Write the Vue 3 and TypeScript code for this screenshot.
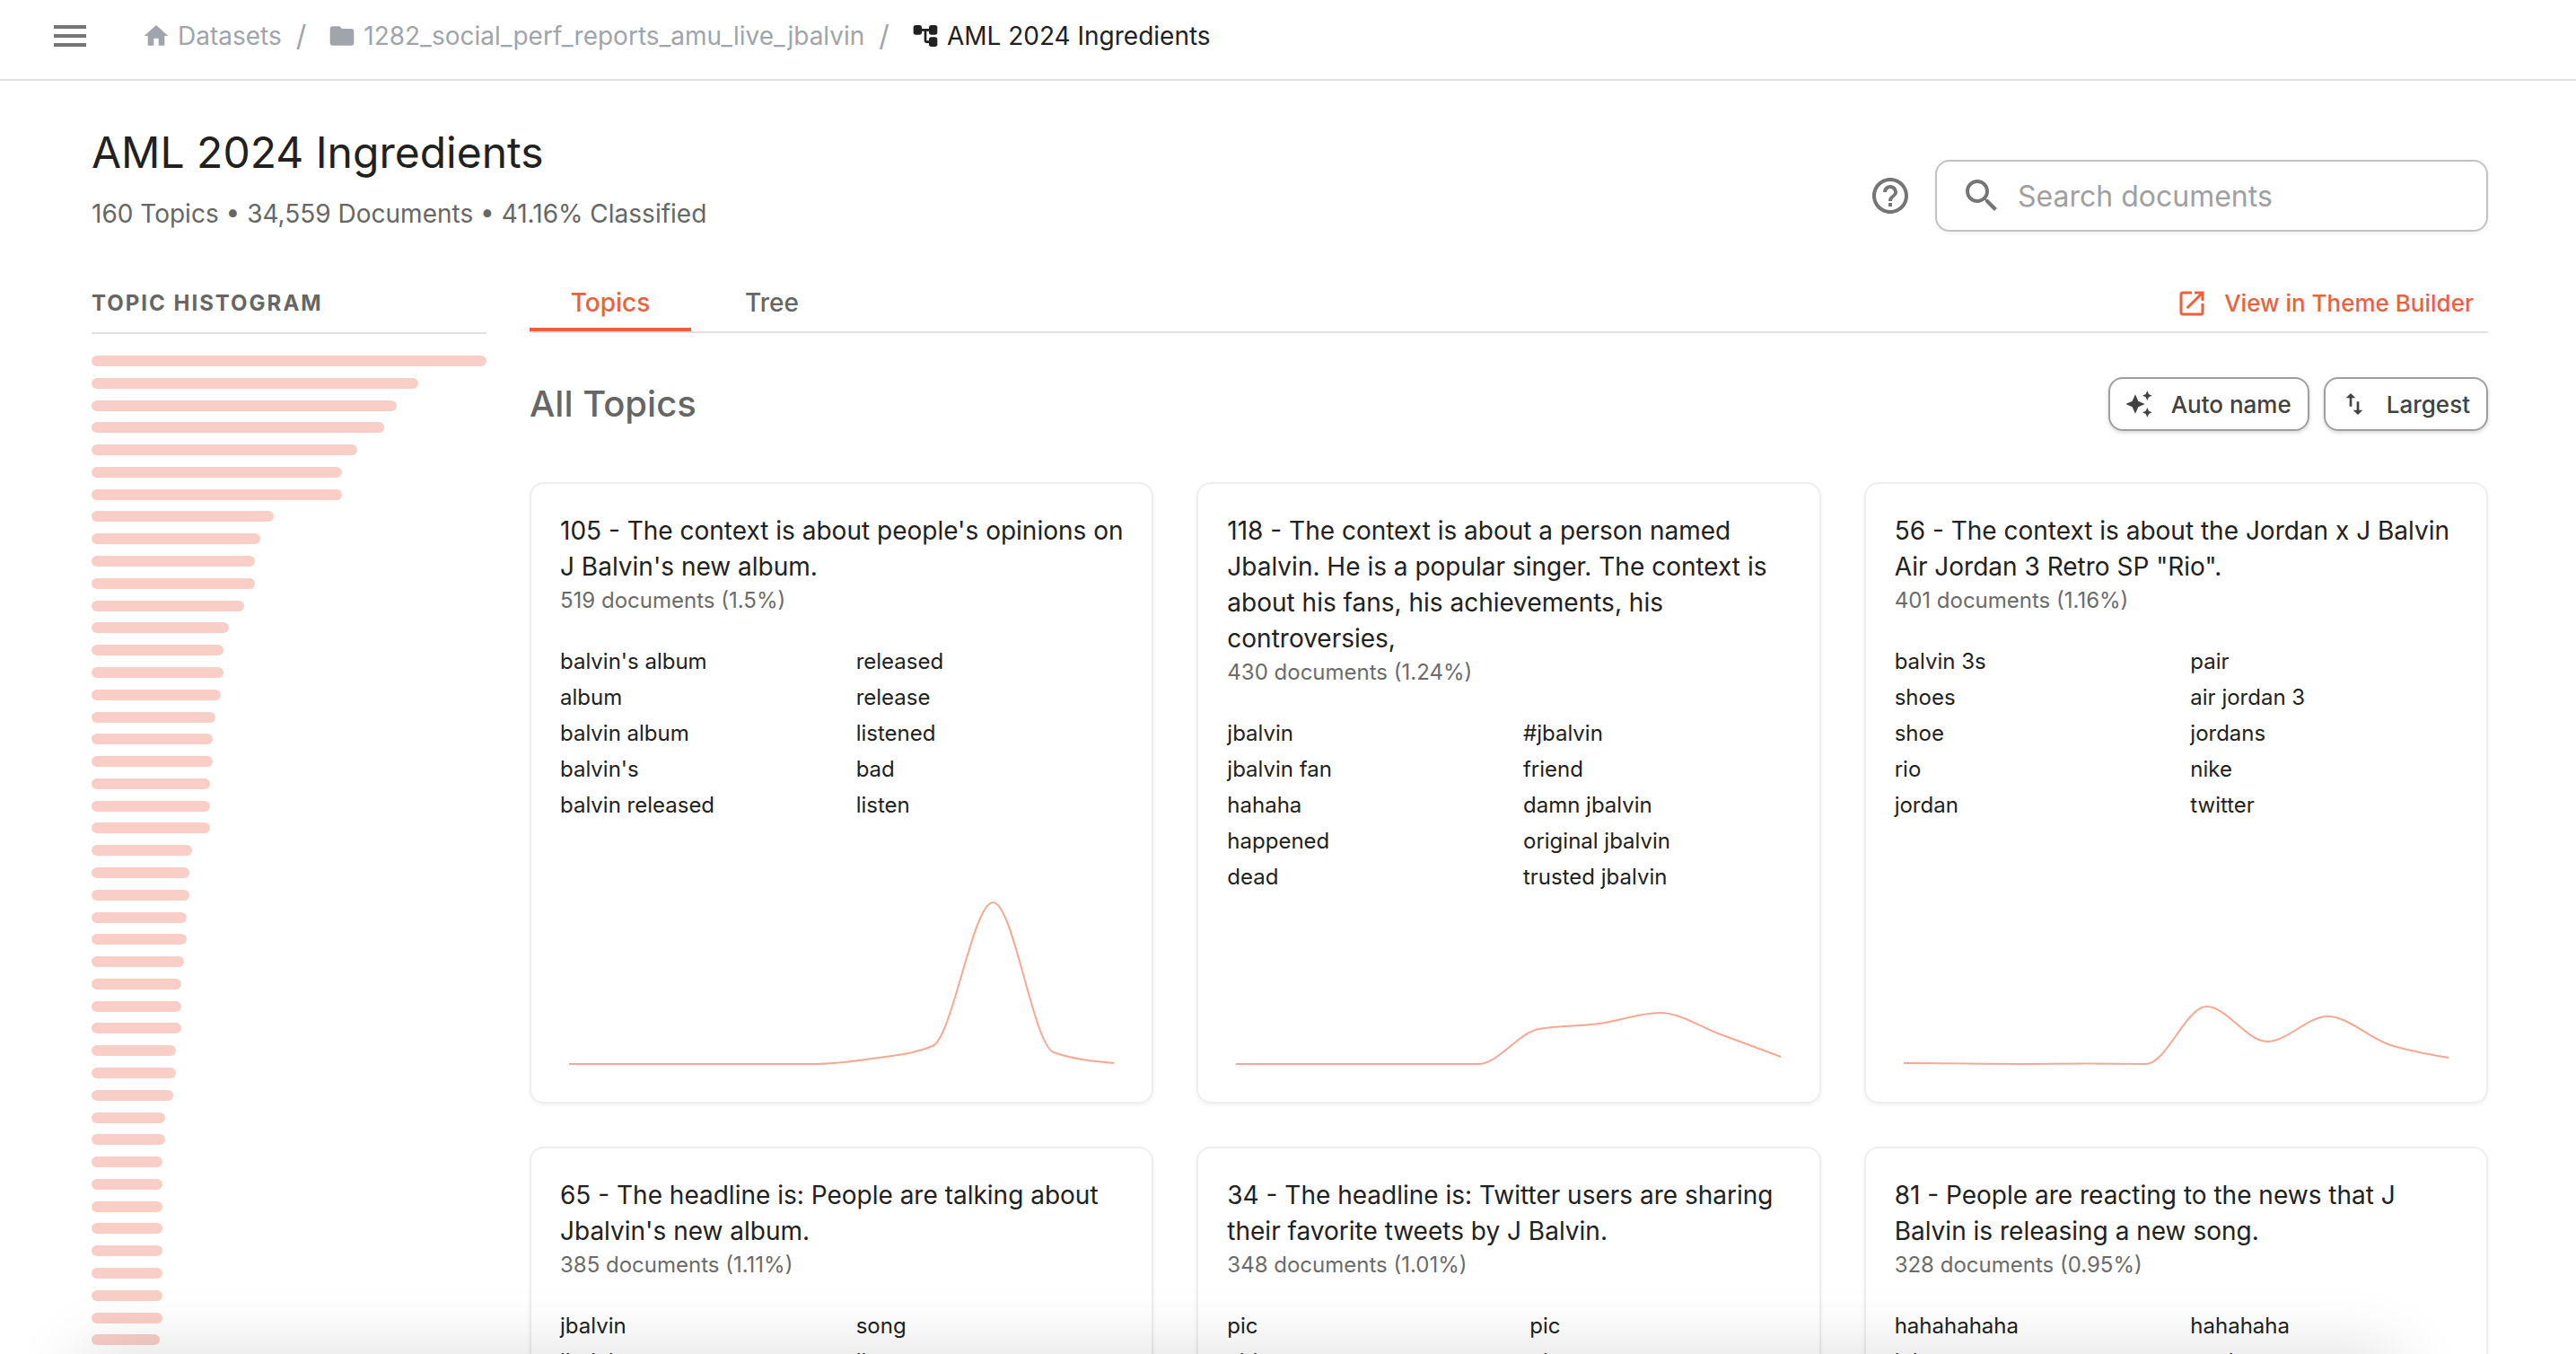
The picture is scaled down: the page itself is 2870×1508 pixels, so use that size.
<script setup lang="ts">
interface Topic {
  title: string
  meta: string
  keywords: [string, string][]
  trend: number[]
  wideLead?: boolean
}

const documentCounts: number[] = [
  519, 429, 401, 385, 349, 329, 329, 239, 222, 215, 215, 201, 180, 173, 173,
  170, 163, 159, 159, 156, 156, 156, 132, 129, 129, 125, 125, 122, 118, 118,
  118, 111, 111, 107, 97, 97, 93, 93, 93, 93, 93, 93, 93, 93, 90,
]
const largest = Math.max(...documentCounts)

const topics: Topic[] = [
  {
    title: "105 - The context is about people's opinions on J Balvin's new album.",
    meta: '519 documents (1.5%)',
    keywords: [
      ["balvin's album", 'released'],
      ['album', 'release'],
      ['balvin album', 'listened'],
      ["balvin's", 'bad'],
      ['balvin released', 'listen'],
    ],
    trend: [0, 0, 0, 0, 0, 6, 20, 180, 13, 1],
  },
  {
    title:
      '118 - The context is about a person named Jbalvin. He is a popular singer. The context is about his fans, his achievements, his controversies,',
    meta: '430 documents (1.24%)',
    keywords: [
      ['jbalvin', '#jbalvin'],
      ['jbalvin fan', 'friend'],
      ['hahaha', 'damn jbalvin'],
      ['happened', 'original jbalvin'],
      ['dead', 'trusted jbalvin'],
    ],
    trend: [0, 0, 0, 0, 0, 39, 45, 57, 33, 8],
  },
  {
    title: '56 - The context is about the Jordan x J Balvin Air Jordan 3 Retro SP "Rio".',
    meta: '401 documents (1.16%)',
    keywords: [
      ['balvin 3s', 'pair'],
      ['shoes', 'air jordan 3'],
      ['shoe', 'jordans'],
      ['rio', 'nike'],
      ['jordan', 'twitter'],
    ],
    trend: [1, 0.5, 0, 0.5, 0, 64, 25, 53, 22, 7],
  },
  {
    title: "65 - The headline is: People are talking about Jbalvin's new album.",
    meta: '385 documents (1.11%)',
    keywords: [
      ['jbalvin', 'song'],
      ['jbalvin', 'listen'],
    ],
    trend: [],
  },
  {
    title: '34 - The headline is: Twitter users are sharing their favorite tweets by J Balvin.',
    meta: '348 documents (1.01%)',
    keywords: [
      ['pic', 'pic'],
      ['vid', 'pic'],
    ],
    trend: [],
    wideLead: true,
  },
  {
    title: '81 - People are reacting to the news that J Balvin is releasing a new song.',
    meta: '328 documents (0.95%)',
    keywords: [
      ['hahahahaha', 'hahahaha'],
      ['lol', 'cool'],
    ],
    trend: [],
  },
]

const CHART = { width: 628, height: 198, inset: 10 }

/* Monotone cubic interpolation through evenly spaced samples. */
function trendPath(values: number[]): string {
  const n = values.length
  if (n < 2) return ''
  const step = (CHART.width - CHART.inset * 2) / (n - 1)
  const pts = values.map((v, i) => ({
    x: CHART.inset + i * step,
    y: CHART.height - CHART.inset - v,
  }))
  const slopes = pts.slice(1).map((p, i) => (p.y - pts[i].y) / step)
  const tangents = pts.map((_, i) => {
    if (i === 0 || i === n - 1) return 0
    const a = slopes[i - 1]
    const b = slopes[i]
    if (a * b <= 0) return 0
    return Math.sign(a) * Math.min(Math.abs(a), Math.abs(b), Math.abs(a + b) / 4) * 2
  })
  tangents[0] = (3 * slopes[0] - tangents[1]) / 2
  tangents[n - 1] = (3 * slopes[n - 2] - tangents[n - 2]) / 2
  let d = `M${pts[0].x} ${pts[0].y}`
  for (let i = 1; i < n; i++) {
    const p = pts[i - 1]
    const q = pts[i]
    const third = step / 3
    d += `C${p.x + third} ${p.y + tangents[i - 1] * third} ${q.x - third} ${q.y - tangents[i] * third} ${q.x} ${q.y}`
  }
  return d
}
</script>

<template>
  <div class="page">
    <header class="topbar">
      <button class="icon-button" type="button" aria-label="Open menu">
        <svg class="icon-l" viewBox="0 0 24 24"><path d="M3 18h18v-2H3v2zm0-5h18v-2H3v2zm0-7v2h18V6H3z" /></svg>
      </button>
      <nav class="crumbs" aria-label="Breadcrumb">
        <a class="crumb" href="#datasets">
          <svg class="icon-s" viewBox="0 0 24 24"><path d="M10 20v-6h4v6h5v-8h3L12 3 2 12h3v8z" /></svg>
          Datasets
        </a>
        <span class="slash">/</span>
        <a class="crumb" href="#folder">
          <svg class="icon-s" viewBox="0 0 24 24"><path d="M10 4H4c-1.100 0-1.990.9-1.990 2L2 18c0 1.100.9 2 2 2h16c1.100 0 2-.9 2-2V8c0-1.100-.9-2-2-2h-8l-2-2z" /></svg>
          1282_social_perf_reports_amu_live_jbalvin
        </a>
        <span class="slash">/</span>
        <a class="crumb current" href="#model" aria-current="page">
          <svg class="icon-s" viewBox="0 0 24 24">
            <rect x="2" y="3" width="7" height="8" rx="2" />
            <rect x="15" y="3" width="7" height="8" rx="2" />
            <rect x="15" y="13" width="7" height="8" rx="2" />
            <path d="M8 6h8v2H8zM11 7h2v8.500c0 .3.200.5.500.5H16v2h-3c-1.100 0-2-.9-2-2z" />
          </svg>
          AML 2024 Ingredients
        </a>
      </nav>
    </header>

    <main class="content">
      <div class="intro">
        <div class="intro-text">
          <h1>AML 2024 Ingredients</h1>
          <p>160 Topics • 34,559 Documents • 41.16% Classified</p>
        </div>
        <div class="intro-tools">
          <button class="icon-button" type="button" aria-label="Help">
            <svg class="icon-l" viewBox="0 0 24 24"><path d="M11 18h2v-2h-2v2zm1-16C6.480 2 2 6.480 2 12s4.480 10 10 10 10-4.480 10-10S17.520 2 12 2zm0 18c-4.410 0-8-3.590-8-8s3.590-8 8-8 8 3.590 8 8-3.590 8-8 8zm0-14c-2.210 0-4 1.790-4 4h2c0-1.100.9-2 2-2s2 .9 2 2c0 2-3 1.750-3 5h2c0-2.250 3-2.500 3-5 0-2.210-1.790-4-4-4z" /></svg>
          </button>
          <label class="search">
            <svg class="icon-l" viewBox="0 0 24 24"><path d="M15.500 14h-.79l-.28-.27C15.410 12.590 16 11.110 16 9.500 16 5.910 13.090 3 9.500 3S3 5.910 3 9.500 5.910 16 9.500 16c1.610 0 3.090-.59 4.230-1.570l.27.28v.79l5 4.990L20.490 19l-4.990-5zm-6 0C7.010 14 5 11.990 5 9.500S7.010 5 9.500 5 14 7.010 14 9.500 11.990 14 9.500 14z" /></svg>
            <input type="text" placeholder="Search documents" aria-label="Search documents" />
          </label>
        </div>
      </div>

      <div class="columns">
        <aside class="histogram">
          <h2>TOPIC HISTOGRAM</h2>
          <ul class="bars">
            <li v-for="(count, i) in documentCounts" :key="i" :style="{ width: (count / largest) * 100 + '%' }"></li>
          </ul>
        </aside>

        <section class="topics">
          <div class="tabs">
            <div class="tab-list" role="tablist">
              <button class="tab active" type="button" role="tab" aria-selected="true">Topics</button>
              <button class="tab" type="button" role="tab" aria-selected="false">Tree</button>
            </div>
            <a class="builder" href="#theme-builder">
              <svg class="icon-m" viewBox="0 0 24 24"><path d="M19 19H5V5h7V3H5c-1.110 0-2 .9-2 2v14c0 1.100.89 2 2 2h14c1.100 0 2-.9 2-2v-7h-2v7zM14 3v2h3.590l-9.830 9.830 1.410 1.410L19 6.410V10h2V3h-7z" /></svg>
              View in Theme Builder
            </a>
          </div>

          <div class="list-head">
            <h2>All Topics</h2>
            <div class="actions">
              <button class="action" type="button">
                <svg class="icon-s" viewBox="0 0 24 24"><path d="M19 9l1.250-2.750L23 5l-2.750-1.250L19 1l-1.250 2.750L15 5l2.750 1.250L19 9zm-7.500.5L9 4 6.500 9.500 1 12l5.500 2.500L9 20l2.500-5.500L17 12l-5.500-2.500zM19 15l-1.250 2.750L15 19l2.750 1.250L19 23l1.250-2.750L23 19l-2.750-1.250L19 15z" /></svg>
                Auto name
              </button>
              <button class="action" type="button">
                <svg class="icon-s" viewBox="0 0 24 24"><path d="M16 17.010V10h-2v7.010h-3L15 21l4-3.990h-3zM9 3L5 6.990h3V14h2V6.990h3L9 3z" /></svg>
                Largest
              </button>
            </div>
          </div>

          <div class="cards">
            <article v-for="topic in topics" :key="topic.title" class="card">
              <h3>{{ topic.title }}</h3>
              <p class="meta">{{ topic.meta }}</p>
              <div class="keywords" :class="{ wide: topic.wideLead }">
                <template v-for="(pair, i) in topic.keywords" :key="i">
                  <span>{{ pair[0] }}</span>
                  <span>{{ pair[1] }}</span>
                </template>
              </div>
              <svg class="chart" :viewBox="`0 0 ${CHART.width} ${CHART.height}`" preserveAspectRatio="none" aria-hidden="true">
                <path :d="trendPath(topic.trend)" />
              </svg>
            </article>
          </div>
        </section>
      </div>
    </main>
    <div class="fold-shadow"></div>
  </div>
</template>

<style>
body {
  margin: 0;
  background: #fff;
}
</style>

<style scoped>
.page {
  position: relative;
  display: flex;
  flex-direction: column;
  height: 100vh;
  overflow: hidden;
  font-family: Inter, "Noto Sans", sans-serif;
  font-size: 28px;
  color: #212121;
}
h1, h2, h3, p, ul {
  margin: 0;
  padding: 0;
}
button, input {
  font: inherit;
  color: inherit;
}
button {
  padding: 0;
  border: 0;
  background: none;
}
a {
  color: inherit;
  text-decoration: none;
}
svg {
  display: block;
  flex: none;
  fill: currentColor;
}
.icon-s { width: 32px; height: 32px; }
.icon-m { width: 36px; height: 36px; }
.icon-l { width: 48px; height: 48px; }
.icon-button { color: #757575; }

.topbar {
  display: flex;
  flex: none;
  align-items: center;
  gap: 56px;
  padding: 16px 54px 24px;
  border-bottom: 2px solid #e0e0e0;
}
.crumbs {
  display: flex;
  align-items: center;
  line-height: 48px;
  color: #a0a4ab;
}
.crumb {
  display: flex;
  align-items: center;
  gap: 8px;
}
.current { color: #212121; }
.slash {
  padding: 0 24px 0 16px;
  font-size: 32px;
}

.content {
  display: flex;
  flex: 1;
  flex-direction: column;
  min-height: 0;
  padding: 48px 98px 0 102px;
}
.intro {
  display: flex;
  flex: none;
  align-items: flex-end;
  justify-content: space-between;
  margin-bottom: 46px;
}
.intro-text h1 {
  font-size: 48px;
  font-weight: 400;
  line-height: 64px;
}
.intro-text p {
  margin-top: 16px;
  line-height: 40px;
  color: #666;
}
.intro-tools {
  display: flex;
  align-items: center;
  gap: 26px;
}
.search {
  display: flex;
  align-items: center;
  gap: 16px;
  box-sizing: border-box;
  width: 616px;
  height: 80px;
  padding: 0 26px;
  border: 2px solid #c2c2c2;
  border-radius: 16px;
  box-shadow: 0 2px 4px rgba(0, 0, 0, 0.06);
  color: #757575;
}
.search input {
  flex: 1;
  min-width: 0;
  padding: 0;
  border: 0;
  outline: 0;
  background: none;
  font-size: 32px;
  color: #212121;
}
.search input::placeholder {
  color: #a0a0a0;
  opacity: 1;
}

.columns {
  display: flex;
  flex: 1;
  gap: 48px;
  min-height: 0;
}
.histogram {
  display: flex;
  flex: none;
  flex-direction: column;
  width: 440px;
}
.histogram h2 {
  flex: none;
  padding-top: 2px;
  border-bottom: 2px solid #e0e0e0;
  font-size: 24px;
  font-weight: 700;
  line-height: 64px;
  letter-spacing: 2px;
  color: #666;
}
.bars {
  display: flex;
  flex: 1;
  flex-direction: column;
  justify-content: space-between;
  padding: 24px 0 9px;
  list-style: none;
}
.bars li {
  height: 12px;
  border-radius: 6px;
  background: #f9cec6;
}

.topics {
  flex: 1;
  min-width: 0;
}
.tabs {
  display: flex;
  align-items: center;
  justify-content: space-between;
  border-bottom: 2px solid #e0e0e0;
}
.tab-list { display: flex; }
.tab {
  box-sizing: border-box;
  width: 180px;
  height: 65px;
  padding-top: 5px;
  border-bottom: 4px solid transparent;
  font-weight: 500;
  color: #666;
}
.tab.active {
  border-bottom-color: #f05f3c;
  color: #f05f3c;
}
.builder {
  display: flex;
  align-items: center;
  gap: 18px;
  padding: 2px 16px 0 0;
  font-size: 26px;
  font-weight: 500;
  color: #f05f3c;
}
.list-head {
  display: flex;
  align-items: center;
  justify-content: space-between;
  margin: 48px 0 56px;
}
.list-head h2 {
  font-size: 40px;
  font-weight: 500;
  line-height: 62px;
  color: #666;
}
.actions {
  display: flex;
  gap: 16px;
}
.action {
  display: flex;
  align-items: center;
  gap: 20px;
  height: 60px;
  padding: 0 18px 0 16px;
  border: 2px solid #9e9e9e;
  border-radius: 16px;
  box-shadow: 0 2px 4px rgba(0, 0, 0, 0.16);
  font-size: 26px;
  font-weight: 500;
  color: #424242;
}

.cards {
  display: grid;
  grid-template-columns: repeat(3, minmax(0, 1fr));
  gap: 48px;
}
.card {
  display: flex;
  flex-direction: column;
  box-sizing: border-box;
  padding: 32px;
  border: 2px solid #eee;
  border-radius: 16px;
  box-shadow: 0 2px 4px rgba(0, 0, 0, 0.06);
}
.card h3 {
  margin-right: -8px;
  font-size: 28px;
  font-weight: 400;
  line-height: 40px;
}
.meta {
  font-size: 24px;
  line-height: 36px;
  color: #6b6b6b;
}
.keywords {
  display: grid;
  grid-template-columns: 1fr 1fr;
  column-gap: 32px;
  margin-top: 30px;
  font-size: 24px;
  line-height: 40px;
}
.keywords.wide { grid-template-columns: 305px 1fr; }
.chart {
  width: 100%;
  height: 198px;
  margin-top: auto;
}
.chart path {
  fill: none;
  stroke: #f6a893;
  stroke-width: 2px;
}

.fold-shadow {
  position: absolute;
  top: 100%;
  right: 200px;
  left: 90px;
  height: 80px;
  box-shadow: 0 0 80px rgba(0, 0, 0, 0.14);
  pointer-events: none;
}
</style>
